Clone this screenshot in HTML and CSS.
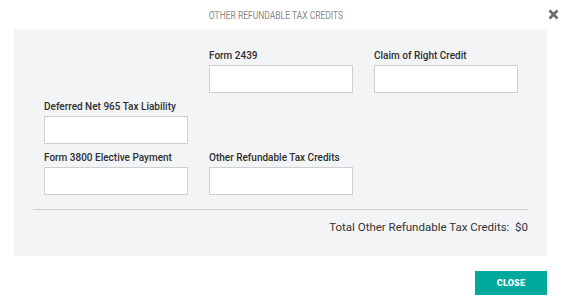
FILE: index.html
```html
<!DOCTYPE html>
<html lang="en">

<head>
    <meta charset="UTF-8">
    <meta name="viewport" content="width=device-width, initial-scale=1.0">
    <title>Other Refundable Tax Credits</title>
    <link rel="stylesheet" href="styles.css">
</head>

<body>
    <div id="modal">
        <div id="header">
            <span id="title">OTHER REFUNDABLE TAX CREDITS</span>
            <button id="closeX" aria-label="close">
                <svg width="11" height="11" viewBox="0 0 11 11">
                    <path d="M1.5 1.5 L9.5 9.5 M9.5 1.5 L1.5 9.5" stroke="#6b6b6b" stroke-width="2.6" stroke-linecap="butt" />
                </svg>
            </button>
        </div>
        <div id="panel">
            <div class="grid">
                <div class="field empty"></div>
                <div class="field">
                    <label>Form 2439</label>
                    <input type="text">
                </div>
                <div class="field">
                    <label>Claim of Right Credit</label>
                    <input type="text">
                </div>

                <div class="field">
                    <label>Deferred Net 965 Tax Liability</label>
                    <input type="text">
                </div>
                <div class="field empty"></div>
                <div class="field empty"></div>

                <div class="field">
                    <label>Form 3800 Elective Payment</label>
                    <input type="text">
                </div>
                <div class="field">
                    <label>Other Refundable Tax Credits</label>
                    <input type="text">
                </div>
            </div>
            <div id="total">Total Other Refundable Tax Credits:&nbsp; $0</div>
        </div>
        <div id="footer">
            <button id="closeBtn">CLOSE</button>
        </div>
    </div>
</body>

</html>
```

FILE: styles.css
```css
* {
    margin: 0;
    padding: 0;
    box-sizing: border-box;
}

body {
    font-family: Roboto, "Liberation Sans", sans-serif;
    background-color: #fff;
    color: #333;
}

#modal {
    width: 567px;
    height: 304px;
    padding: 0 20px 0 14px;
}

#header {
    height: 29px;
    display: flex;
    align-items: center;
    justify-content: center;
    position: relative;
}

#title {
    font-size: 10px;
    color: #8a8a8a;
    transform: scaleX(0.85);
    margin-top: 1px;
    margin-right: 9px;
}

#closeX {
    position: absolute;
    right: -12px;
    top: 9px;
    border: none;
    background: none;
    width: 11px;
    height: 11px;
    display: flex;
}

#panel {
    background-color: #f3f4f6;
    height: 227px;
    padding: 20px 19px 0 19px;
}

.grid {
    display: grid;
    grid-template-columns: repeat(3, 144px);
    column-gap: 21px;
    row-gap: 7px;
    padding-left: 11px;
    padding-bottom: 14px;
    border-bottom: 1px solid #cfd0d2;
}

.field {
    display: flex;
    flex-direction: column;
    height: 44px;
}

.field label {
    font-size: 10px;
    font-weight: 500;
    line-height: 14px;
    height: 14px;
    margin-bottom: 2px;
    color: #2f2f2f;
    white-space: nowrap;
}

.field input {
    width: 144px;
    height: 28px;
    border: 1px solid #cfcfcf;
    background-color: #fff;
}

#total {
    text-align: right;
    font-size: 11.5px;
    color: #333;
    margin-top: 10px;
    line-height: 14px;
}

#footer {
    display: flex;
    justify-content: flex-end;
    padding-top: 15px;
}

#closeBtn {
    width: 72px;
    height: 24px;
    border: none;
    background-color: #00a99d;
    color: #fff;
    font-family: Roboto, "Liberation Sans", sans-serif;
    font-weight: 900;
    font-size: 9px;
    letter-spacing: 0.2px;
}
```
